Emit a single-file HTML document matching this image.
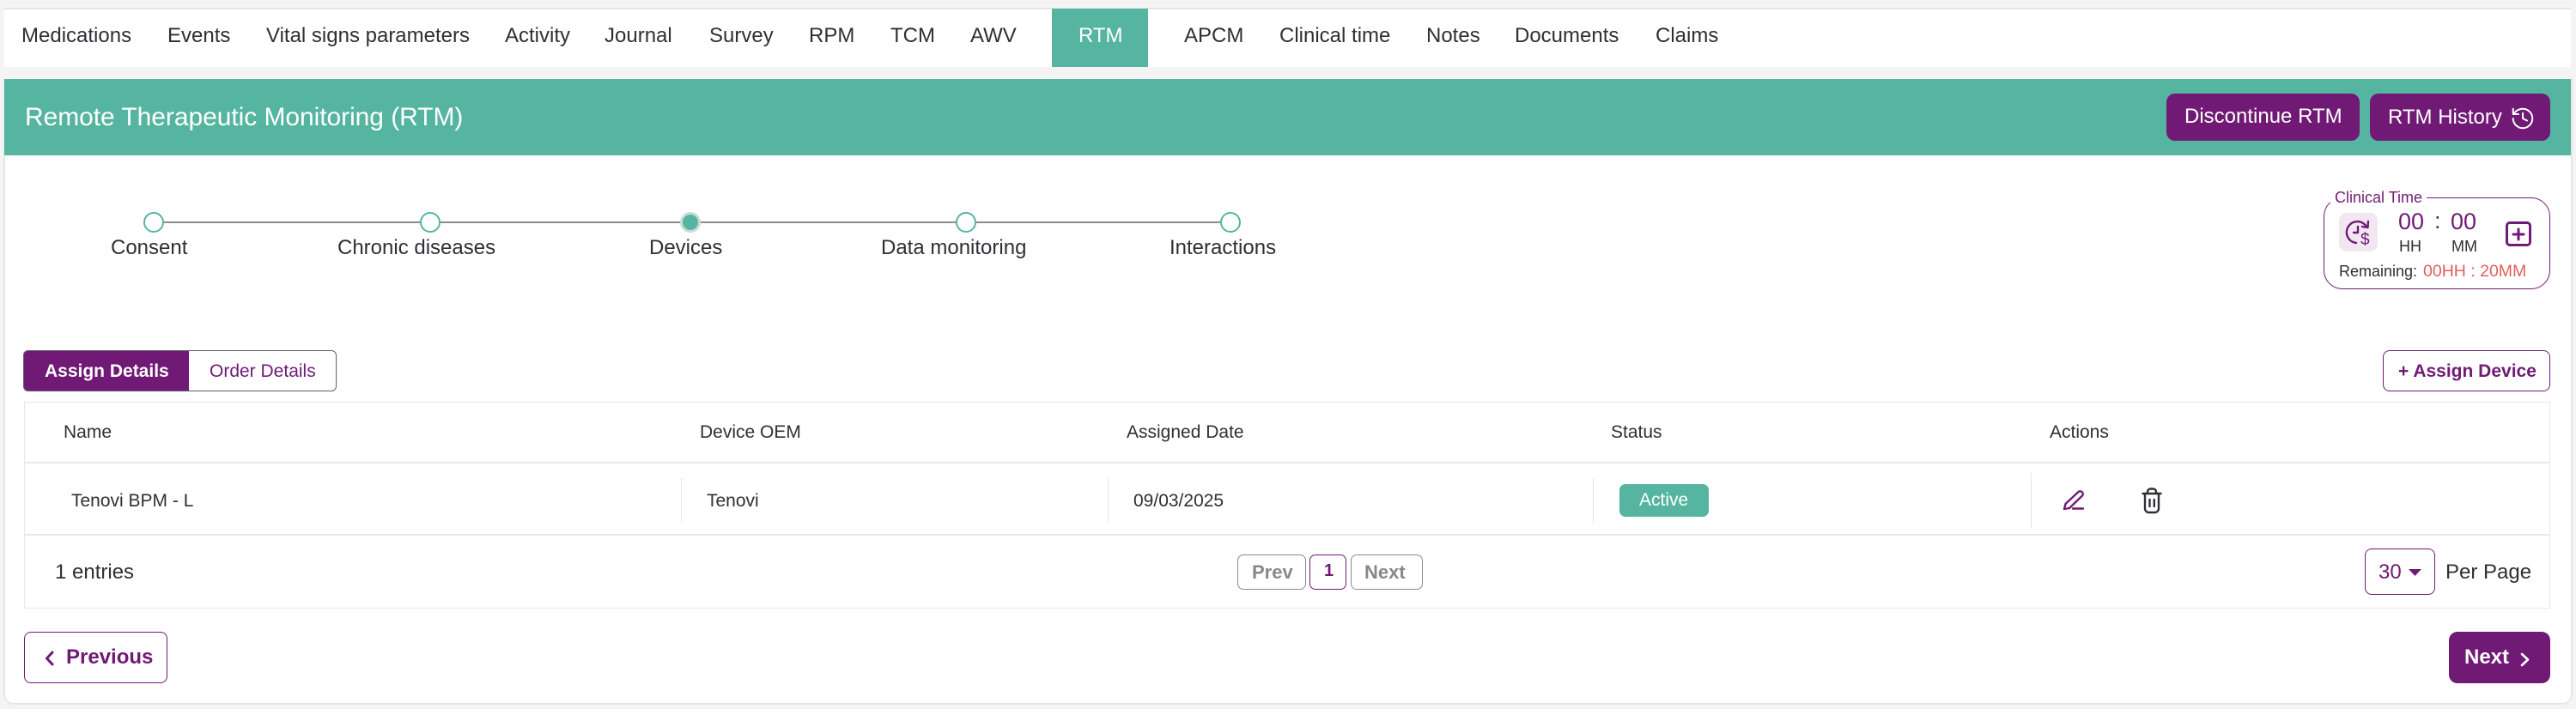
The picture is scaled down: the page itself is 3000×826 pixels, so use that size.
<!DOCTYPE html>
<html>
<head>
<meta charset="utf-8">
<style>
html,body{margin:0;padding:0;width:3000px;height:826px;overflow:hidden;background:#f4f4f4}
body{position:relative;font-family:"Liberation Sans",Arial,sans-serif;color:#2f2f35}
div,span.t{position:absolute;box-sizing:border-box}
.t{white-space:nowrap;line-height:30px;font-size:24px}
.s21{font-size:21px}
.b{font-weight:700}
.p{color:#701a75}
.w{color:#fff}
.g{color:#88888c}
.btn{border-radius:10px}
.o{border:1.5px solid #701a75;background:#fff;border-radius:8px}
.sep{width:1px;background:#e3e3e3}
.line{background:#e8e8e8;height:2px}
.c{width:24px;height:24px;border-radius:50%;background:#fff;border:2px solid #55b5a0;top:247px}
</style>
</head>
<body>
<!-- nav -->
<div style="left:5px;top:9px;width:2989px;height:69px;background:#fff;border-top:2px solid #e6e6e6"></div>
<div style="left:1225px;top:10px;width:112px;height:68px;background:#55b5a0"></div>
<span class="t" style="left:25px;top:27px">Medications</span>
<span class="t" style="left:195px;top:27px">Events</span>
<span class="t" style="left:310px;top:27px">Vital signs parameters</span>
<span class="t" style="left:588px;top:27px">Activity</span>
<span class="t" style="left:704px;top:27px">Journal</span>
<span class="t" style="left:826px;top:27px">Survey</span>
<span class="t" style="left:942px;top:27px">RPM</span>
<span class="t" style="left:1037px;top:27px">TCM</span>
<span class="t" style="left:1130px;top:27px">AWV</span>
<span class="t w" style="left:1256px;top:27px">RTM</span>
<span class="t" style="left:1379px;top:27px">APCM</span>
<span class="t" style="left:1490px;top:27px">Clinical time</span>
<span class="t" style="left:1661px;top:27px">Notes</span>
<span class="t" style="left:1764px;top:27px">Documents</span>
<span class="t" style="left:1928px;top:27px">Claims</span>

<!-- panel -->
<div style="left:4px;top:91px;width:2992px;height:730px;background:#fff;border:1px solid #e6e6e6;border-width:0 2px 2px 2px;border-radius:0 0 12px 12px"></div>
<div style="left:5px;top:92px;width:2989px;height:89px;background:#55b5a0"></div>
<span class="t w" style="left:29px;top:122px;font-size:30px;letter-spacing:-.06px">Remote Therapeutic Monitoring (RTM)</span>
<div class="btn" style="left:2523px;top:109px;width:225px;height:55px;background:#701a75"></div>
<div class="btn" style="left:2760px;top:109px;width:210px;height:55px;background:#701a75"></div>
<span class="t w" style="left:2544px;top:121px">Discontinue RTM</span>
<span class="t w" style="left:2781px;top:122px">RTM History</span>

<!-- stepper -->
<div style="left:191px;top:258px;width:1230px;height:2px;background:#8c8c8c"></div>
<div class="c" style="left:167px"></div>
<div class="c" style="left:489px"></div>
<div class="c" style="left:792px;background:#55b5a0;border:3px solid #c8dcd8"></div>
<div class="c" style="left:1113px"></div>
<div class="c" style="left:1421px"></div>
<span class="t" style="left:129px;top:274px">Consent</span>
<span class="t" style="left:393px;top:274px">Chronic diseases</span>
<span class="t" style="left:756px;top:274px">Devices</span>
<span class="t" style="left:1026px;top:274px">Data monitoring</span>
<span class="t" style="left:1362px;top:274px">Interactions</span>

<!-- clinical time -->
<div style="left:2706px;top:230px;width:264px;height:107px;border:1.5px solid #701a75;border-radius:22px"></div>
<div style="left:2714px;top:222px;width:112px;height:16px;background:#fff"></div>
<span class="t p" style="left:2719px;top:215px;font-size:18px">Clinical Time</span>
<div style="left:2724px;top:248px;width:45px;height:45px;border-radius:9px;background:#f1e7f1"></div>
<span class="t p" style="left:2793px;top:243px;font-size:27px">00</span>
<span class="t p" style="left:2835px;top:242px;font-size:27px">:</span>
<span class="t p" style="left:2854px;top:243px;font-size:27px">00</span>
<span class="t" style="left:2794px;top:272px;font-size:18px">HH</span>
<span class="t" style="left:2855px;top:272px;font-size:18px">MM</span>
<span class="t" style="left:2724px;top:301px;font-size:18px">Remaining:</span>
<span class="t" style="left:2822px;top:301px;font-size:19.500px;color:#e0605c">00HH : 20MM</span>
<div style="left:2918px;top:258px;width:30px;height:29px;border:3px solid #701a75;border-radius:5px"></div>

<!-- tabs -->
<div style="left:27px;top:408px;width:365px;height:48px;border:1.5px solid #5f5f6a;border-radius:6px;background:#fff"></div>
<div style="left:27px;top:408px;width:193px;height:48px;background:#701a75;border-radius:6px 0 0 6px;border:1.5px solid #5f5f6a;border-right:none"></div>
<span class="t s21 b w" style="left:52px;top:418px">Assign Details</span>
<span class="t s21 p" style="left:244px;top:418px">Order Details</span>
<div class="o" style="left:2775px;top:408px;width:195px;height:48px"></div>
<span class="t s21 b p" style="left:2793px;top:418px">+ Assign Device</span>

<!-- table -->
<div style="left:28px;top:468px;width:2942px;height:241px;border:1.5px solid #e8e8e8"></div>
<div class="line" style="left:28px;top:538px;width:2942px"></div>
<div class="line" style="left:28px;top:622px;width:2942px"></div>
<span class="t s21" style="left:74px;top:489px">Name</span>
<span class="t s21" style="left:815px;top:489px">Device OEM</span>
<span class="t s21" style="left:1312px;top:489px">Assigned Date</span>
<span class="t s21" style="left:1876px;top:489px">Status</span>
<span class="t s21" style="left:2387px;top:489px">Actions</span>
<div class="sep" style="left:793px;top:557px;height:52px"></div>
<div class="sep" style="left:1290px;top:557px;height:52px"></div>
<div class="sep" style="left:1855px;top:557px;height:52px"></div>
<div class="sep" style="left:2365px;top:551px;height:64px"></div>
<span class="t s21" style="left:83px;top:569px">Tenovi BPM - L</span>
<span class="t s21" style="left:823px;top:569px">Tenovi</span>
<span class="t s21" style="left:1320px;top:569px">09/03/2025</span>
<div style="left:1886px;top:564px;width:104px;height:38px;background:#55b5a0;border-radius:7px"></div>
<span class="t s21 w" style="left:1909px;top:568px">Active</span>

<span class="t" style="left:64px;top:652px">1 entries</span>
<div style="left:1441px;top:646px;width:80px;height:41px;border:1.5px solid #8a8a8e;border-radius:7px;background:#fff"></div>
<div style="left:1525px;top:646px;width:43px;height:41px;border:1.5px solid #701a75;border-radius:7px;background:#fff"></div>
<div style="left:1573px;top:646px;width:84px;height:41px;border:1.5px solid #8a8a8e;border-radius:7px;background:#fff"></div>
<span class="t b g" style="left:1458px;top:652px;font-size:22px">Prev</span>
<span class="t b p" style="left:1542px;top:650px;font-size:20px">1</span>
<span class="t b g" style="left:1589px;top:652px;font-size:22px">Next</span>
<div class="o" style="left:2754px;top:639px;width:82px;height:54px"></div>
<span class="t p" style="left:2770px;top:652px;font-size:24px">30</span>
<span class="t" style="left:2848px;top:652px">Per Page</span>

<!-- footer buttons -->
<div class="o" style="left:28px;top:736px;width:167px;height:60px"></div>
<span class="t b p" style="left:77px;top:751px">Previous</span>
<div class="btn" style="left:2852px;top:736px;width:118px;height:60px;background:#701a75"></div>
<span class="t b w" style="left:2870px;top:751px">Next</span>

<!-- icons -->
<svg width="3000" height="826" viewBox="0 0 3000 826" style="position:absolute;left:0;top:0" fill="none" stroke-linecap="round" stroke-linejoin="round">
  <g transform="translate(2923,123) scale(1.25)" stroke="#fff" stroke-width="1.600">
    <path d="M3 12a9 9 0 1 0 9-9 9.75 9.75 0 0 0-6.74 2.74L3 8"/>
    <path d="M3 3v5h5"/>
    <path d="M12 7v5l4 2"/>
  </g>
  <g stroke="#701a75" stroke-width="2.400">
    <path d="M2756 264A12.500 12.500 0 1 0 2744 283"/>
    <path d="M2758 258L2757.500 265L2751 264"/>
    <path d="M2746 264V271H2741"/>
  </g>
  <text x="2749" y="285" font-family="Liberation Sans" font-size="19" fill="#701a75">$</text>
  <path d="M2933 267V279M2927 273H2939" stroke="#701a75" stroke-width="3"/>
  <g stroke="#701a75" stroke-width="2.400">
    <path d="M2404 593L2405.500 587L2420 573.500A3 3 0 0 1 2425 577.500L2410 592Z"/>
    <path d="M2414 592.500H2426"/>
  </g>
  <g stroke="#2f2f35" stroke-width="2.400">
    <path d="M2495.500 575H2516.500"/>
    <path d="M2501 575V573A3.500 3.500 0 0 1 2504.500 569.500H2507.500A3.500 3.500 0 0 1 2511 573V575"/>
    <path d="M2498 575V592.500A4.500 4.500 0 0 0 2502.500 597H2509.500A4.500 4.500 0 0 0 2514 592.500V575"/>
    <path d="M2503.500 582V590M2508.800 582V590"/>
  </g>
  <path d="M2805 663H2820L2812.500 671Z" fill="#701a75"/>
  <path d="M61 760L54.500 767L61 774" stroke="#701a75" stroke-width="3"/>
  <path d="M2937 762L2944 768.500L2937 775" stroke="#fff" stroke-width="2.600"/>
</svg>
</body>
</html>
